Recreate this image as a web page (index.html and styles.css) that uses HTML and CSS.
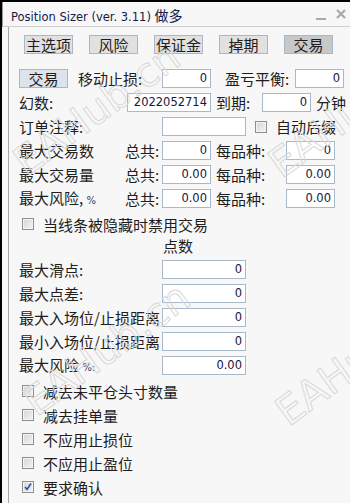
FILE: index.html
```html
<!DOCTYPE html>
<html lang="zh">
<head>
    <meta charset="UTF-8">
    <meta name="viewport" content="width=device-width, initial-scale=1.0">
    <title>Position Sizer</title>
    <link rel="stylesheet" href="styles.css">
</head>
<body>
<div class="ventana">
    <div class="titulo">
        <span class="titulo-texto">Position Sizer (ver. 3.11) <span class="cjk">做多</span></span>
        <span class="btn-min"></span>
        <span class="btn-cerrar">
            <svg width="10" height="10" viewBox="0 0 10 10"><path d="M1 1 L9 9 M9 1 L1 9" stroke="#a8a8a8" stroke-width="2.2"/></svg>
        </span>
    </div>

    <div class="panel">
        <!-- pestañas -->
        <div class="pestanas">
            <button class="pestana">主选项</button>
            <button class="pestana">风险</button>
            <button class="pestana">保证金</button>
            <button class="pestana">掉期</button>
            <button class="pestana activa">交易</button>
        </div>

        <div class="fila">
            <button class="boton-trade">交易</button>
            <span class="lbl w94">移动止损:</span>
            <span class="campo w49">0</span>
            <span class="lbl w84 pl14">盈亏平衡:</span>
            <span class="campo w49">0</span>
        </div>
        <div class="fila">
            <span class="lbl w108 pl0">幻数:</span>
            <span class="campo w84">2022052714</span>
            <span class="lbl w51 pl5">到期:</span>
            <span class="campo w49">0</span>
            <span class="lbl pl5">分钟</span>
        </div>
        <div class="fila">
            <span class="lbl w143 pl0">订单注释:</span>
            <span class="campo w84"></span>
            <span class="caja ml9"></span>
            <span class="lbl pl9">自动后缀</span>
        </div>
        <div class="fila">
            <span class="lbl w106 pl0">最大交易数</span>
            <span class="lbl w37 pl0">总共:</span>
            <span class="campo w49">0</span>
            <span class="lbl w75 pl5">每品种:</span>
            <span class="campo w49">0</span>
        </div>
        <div class="fila">
            <span class="lbl w106 pl0">最大交易量</span>
            <span class="lbl w37 pl0">总共:</span>
            <span class="campo w49">0.00</span>
            <span class="lbl w75 pl5">每品种:</span>
            <span class="campo w49">0.00</span>
        </div>
        <div class="fila">
            <span class="lbl w106 pl0">最大风险, <span class="pct">%</span></span>
            <span class="lbl w37 pl0">总共:</span>
            <span class="campo w49">0.00</span>
            <span class="lbl w75 pl5">每品种:</span>
            <span class="campo w49">0.00</span>
        </div>

        <div class="fila-check primera">
            <span class="caja"></span>
            <span class="lbl pl9">当线条被隐藏时禁用交易</span>
        </div>

        <div class="cabecera">点数</div>

        <div class="fila">
            <span class="lbl w143 pl0">最大滑点:</span>
            <span class="campo w84">0</span>
        </div>
        <div class="fila">
            <span class="lbl w143 pl0">最大点差:</span>
            <span class="campo w84">0</span>
        </div>
        <div class="fila">
            <span class="lbl w143 pl0">最大入场位/止损距离</span>
            <span class="campo w84">0</span>
        </div>
        <div class="fila">
            <span class="lbl w143 pl0">最小入场位/止损距离</span>
            <span class="campo w84">0</span>
        </div>
        <div class="fila">
            <span class="lbl w143 pl0">最大风险 <span class="pct">%:</span></span>
            <span class="campo w84">0.00</span>
        </div>

        <div class="checks">
            <div class="fila-check"><span class="caja"></span><span class="lbl pl9">减去未平仓头寸数量</span></div>
            <div class="fila-check"><span class="caja"></span><span class="lbl pl9">减去挂单量</span></div>
            <div class="fila-check"><span class="caja"></span><span class="lbl pl9">不应用止损位</span></div>
            <div class="fila-check"><span class="caja"></span><span class="lbl pl9">不应用止盈位</span></div>
            <div class="fila-check">
                <span class="caja marcada">
                    <svg width="10" height="10" viewBox="0 0 10 10"><path d="M2 5 L4 7.5 L8 1.5" stroke="#2e4fa8" stroke-width="1.6" fill="none"/></svg>
                </span>
                <span class="lbl pl9">要求确认</span>
            </div>
        </div>
    </div>

    <!-- marcas de agua -->
    <span class="marca m1">EAHub.cn</span>
    <span class="marca m2">EAHub.cn</span>
    <span class="marca m3">EAHub.cn</span>
    <span class="marca m4">EAHub.cn</span>
</div>
</body>
</html>
```

FILE: styles.css
```css
body {
    margin: 0;
    background-color: #f7f7f7;
    font-family: "Noto Sans CJK SC", sans-serif;
    color: #231c1c;
}
.ventana {
    position: relative;
    width: 348px;
    height: 501px;
    border-top: 2px solid #000;
    border-left: 2px solid #000;
    background-color: #f7f7f7;
    overflow: hidden;
}
.titulo {
    height: 24px;
    display: flex;
    align-items: center;
    border-bottom: 1px solid #cfcfcf;
    border-left: 1px solid #9a9a9a;
    padding-left: 8px;
}
.titulo-texto {
    font-family: "DejaVu Sans", sans-serif;
    font-size: 11.5px;
    color: #15204a;
    flex: 1;
    padding-top: 1px;
}
.titulo-texto .cjk {
    font-family: "Noto Sans CJK SC", sans-serif;
    font-size: 14px;
}
.btn-min {
    width: 10px;
    height: 2px;
    background-color: #a8a8a8;
    margin-top: 9px;
    margin-right: 10px;
}
.btn-cerrar {
    display: flex;
    margin-right: 4px;
}
.panel {
    margin-left: 6px;
    border-left: 1px solid #a6a6a6;
    height: 477px;
    padding-left: 10px;
}
.pestanas {
    display: flex;
    gap: 16px;
    padding-top: 8px;
    padding-left: 5px;
    height: 19px;
    margin-bottom: 15px;
}
.pestana, .boton-trade {
    width: 49px;
    height: 19px;
    padding: 0;
    border: 1px solid #a9b7c6;
    background-color: #e1e1e1;
    font-family: "Noto Sans CJK SC", sans-serif;
    font-size: 15px;
    line-height: 17px;
    color: #231c1c;
}
.pestana.activa {
    background-color: #c8c8c8;
}
.boton-trade {
    background-color: #dde3ea;
}
.fila {
    display: flex;
    align-items: center;
    height: 19px;
    margin-top: 5px;
}
.lbl {
    font-size: 15px;
    line-height: 19px;
    white-space: nowrap;
    padding-left: 10px;
    box-sizing: border-box;
}
.pl0 { padding-left: 0; }
.pl5 { padding-left: 5px; }
.pl9 { padding-left: 9px; }
.pl14 { padding-left: 14px; }
.ml9 { margin-left: 9px; }
.w37 { width: 37px; }
.w49 { width: 49px; }
.w51 { width: 51px; }
.w75 { width: 75px; }
.w84 { width: 84px; }
.w94 { width: 94px; }
.w106 { width: 106px; }
.w108 { width: 108px; }
.w143 { width: 143px; }
.campo {
    height: 19px;
    box-sizing: border-box;
    border: 1px solid #a9b9ca;
    background-color: #fff;
    font-family: "DejaVu Sans", sans-serif;
    font-size: 11.5px;
    line-height: 17px;
    text-align: right;
    padding-right: 3px;
    color: #1a1440;
    flex-shrink: 0;
}
.pct {
    font-family: "DejaVu Sans", sans-serif;
    font-size: 10px;
    color: #3a3a70;
}
.caja {
    width: 12px;
    height: 12px;
    box-sizing: border-box;
    border: 1px solid #8f8f8f;
    background: linear-gradient(135deg, #d6d6d6, #f3f3f3);
    box-shadow: inset 0 0 0 1px #f4f4f4;
    display: inline-flex;
    align-items: center;
    justify-content: center;
    flex-shrink: 0;
}
.fila-check {
    display: flex;
    align-items: center;
    height: 24px;
    padding-left: 3px;
}
.fila-check.primera {
    margin-top: 4px;
}
.cabecera {
    padding-left: 144px;
    font-size: 15px;
    line-height: 19px;
}
.checks {
    margin-top: 4px;
}

/* marca de agua encima de todo */
.marca {
    position: absolute;
    font-family: "DejaVu Sans", sans-serif;
    font-size: 40px;
    color: transparent;
    -webkit-text-stroke: 1px #d9d9d9;
    transform: rotate(-36deg);
    transform-origin: left bottom;
    white-space: nowrap;
    pointer-events: none;
    line-height: 1;
}
.m1 { left: 28px; top: 140px; }
.m2 { left: 38px; top: 380px; }
.m3 { left: 283px; top: 142px; }
.m4 { left: 290px; top: 390px; }
```
